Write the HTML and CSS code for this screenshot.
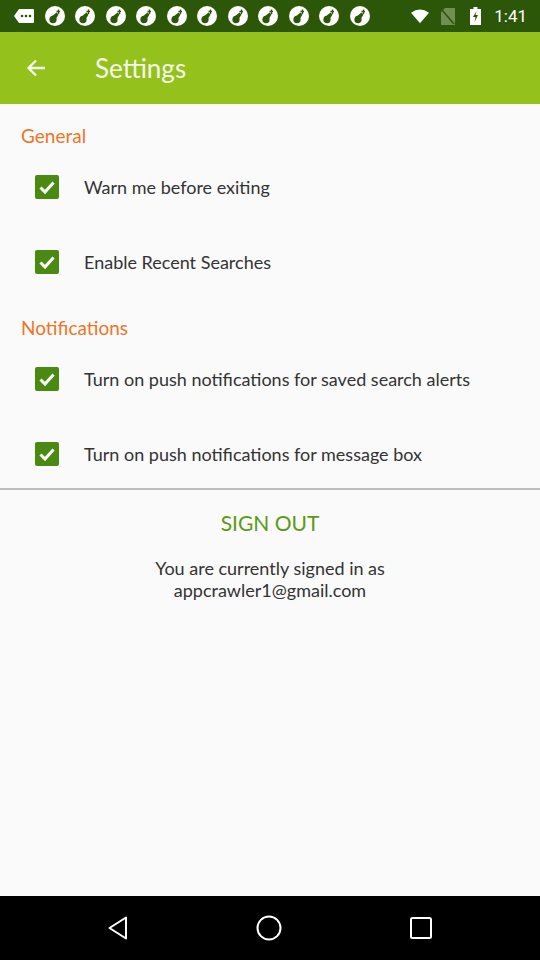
FILE: index.html
```html
<!DOCTYPE html>
<html>
<head>
<meta charset="utf-8">
<link rel="stylesheet" href="styles.css">
</head>
<body>
<div class="screen">
  <div class="statusbar">
    <div class="notifs">
      <svg class="msg" width="20" height="14" viewBox="0 0 20 14"><path d="M5 0H19a1 1 0 0 1 1 1V13a1 1 0 0 1-1 1H5L0 7Z" fill="#fff"/><circle cx="8" cy="7" r="1.3" fill="#2c5709"/><circle cx="12" cy="7" r="1.3" fill="#2c5709"/><circle cx="16" cy="7" r="1.3" fill="#2c5709"/></svg>
      <svg class="nt" viewBox="0 0 20 20"><circle cx="10" cy="10" r="10" fill="#fff"/><ellipse cx="8" cy="13.5" rx="3.6" ry="3.8" fill="#2c5709"/><path d="M6 11L11.5 6.5L13.5 8.5L10.5 13.5Z" fill="#2c5709"/><path d="M13.5 3.5V8M11.5 5.5H15" stroke="#2c5709" stroke-width="1.3"/></svg>
      <svg class="nt" viewBox="0 0 20 20"><circle cx="10" cy="10" r="10" fill="#fff"/><ellipse cx="8" cy="13.5" rx="3.6" ry="3.8" fill="#2c5709"/><path d="M6 11L11.5 6.5L13.5 8.5L10.5 13.5Z" fill="#2c5709"/><path d="M13.5 3.5V8M11.5 5.5H15" stroke="#2c5709" stroke-width="1.3"/></svg>
      <svg class="nt" viewBox="0 0 20 20"><circle cx="10" cy="10" r="10" fill="#fff"/><ellipse cx="8" cy="13.5" rx="3.6" ry="3.8" fill="#2c5709"/><path d="M6 11L11.5 6.5L13.5 8.5L10.5 13.5Z" fill="#2c5709"/><path d="M13.5 3.5V8M11.5 5.5H15" stroke="#2c5709" stroke-width="1.3"/></svg>
      <svg class="nt" viewBox="0 0 20 20"><circle cx="10" cy="10" r="10" fill="#fff"/><ellipse cx="8" cy="13.5" rx="3.6" ry="3.8" fill="#2c5709"/><path d="M6 11L11.5 6.5L13.5 8.5L10.5 13.5Z" fill="#2c5709"/><path d="M13.5 3.5V8M11.5 5.5H15" stroke="#2c5709" stroke-width="1.3"/></svg>
      <svg class="nt" viewBox="0 0 20 20"><circle cx="10" cy="10" r="10" fill="#fff"/><ellipse cx="8" cy="13.5" rx="3.6" ry="3.8" fill="#2c5709"/><path d="M6 11L11.5 6.5L13.5 8.5L10.5 13.5Z" fill="#2c5709"/><path d="M13.5 3.5V8M11.5 5.5H15" stroke="#2c5709" stroke-width="1.3"/></svg>
      <svg class="nt" viewBox="0 0 20 20"><circle cx="10" cy="10" r="10" fill="#fff"/><ellipse cx="8" cy="13.5" rx="3.6" ry="3.8" fill="#2c5709"/><path d="M6 11L11.5 6.5L13.5 8.5L10.5 13.5Z" fill="#2c5709"/><path d="M13.5 3.5V8M11.5 5.5H15" stroke="#2c5709" stroke-width="1.3"/></svg>
      <svg class="nt" viewBox="0 0 20 20"><circle cx="10" cy="10" r="10" fill="#fff"/><ellipse cx="8" cy="13.5" rx="3.6" ry="3.8" fill="#2c5709"/><path d="M6 11L11.5 6.5L13.5 8.5L10.5 13.5Z" fill="#2c5709"/><path d="M13.5 3.5V8M11.5 5.5H15" stroke="#2c5709" stroke-width="1.3"/></svg>
      <svg class="nt" viewBox="0 0 20 20"><circle cx="10" cy="10" r="10" fill="#fff"/><ellipse cx="8" cy="13.5" rx="3.6" ry="3.8" fill="#2c5709"/><path d="M6 11L11.5 6.5L13.5 8.5L10.5 13.5Z" fill="#2c5709"/><path d="M13.5 3.5V8M11.5 5.5H15" stroke="#2c5709" stroke-width="1.3"/></svg>
      <svg class="nt" viewBox="0 0 20 20"><circle cx="10" cy="10" r="10" fill="#fff"/><ellipse cx="8" cy="13.5" rx="3.6" ry="3.8" fill="#2c5709"/><path d="M6 11L11.5 6.5L13.5 8.5L10.5 13.5Z" fill="#2c5709"/><path d="M13.5 3.5V8M11.5 5.5H15" stroke="#2c5709" stroke-width="1.3"/></svg>
      <svg class="nt" viewBox="0 0 20 20"><circle cx="10" cy="10" r="10" fill="#fff"/><ellipse cx="8" cy="13.5" rx="3.6" ry="3.8" fill="#2c5709"/><path d="M6 11L11.5 6.5L13.5 8.5L10.5 13.5Z" fill="#2c5709"/><path d="M13.5 3.5V8M11.5 5.5H15" stroke="#2c5709" stroke-width="1.3"/></svg>
      <svg class="nt" viewBox="0 0 20 20"><circle cx="10" cy="10" r="10" fill="#fff"/><ellipse cx="8" cy="13.5" rx="3.6" ry="3.8" fill="#2c5709"/><path d="M6 11L11.5 6.5L13.5 8.5L10.5 13.5Z" fill="#2c5709"/><path d="M13.5 3.5V8M11.5 5.5H15" stroke="#2c5709" stroke-width="1.3"/></svg>
    </div>
    <div class="sys">
      <svg width="18" height="15" viewBox="0 0 21 16"><path d="M0 3.5Q10.5-4 21 3.5L10.5 16Z" fill="#fff"/></svg>
      <svg width="14" height="17" viewBox="0 0 14 17"><path d="M4 0H14V17H0V4Z" fill="#6f8f55"/><path d="M1 2L13 16" stroke="#2c5709" stroke-width="1.6"/></svg>
      <svg width="11" height="18" viewBox="0 0 11 18"><path d="M3.5 0H7.5V2H11V18H0V2H3.5Z" fill="#fff"/><path d="M6.5 4L3 10H5.5L4.5 15L8 8H5.5Z" fill="#2c5709"/></svg>
      <span class="time">1:41</span>
    </div>
  </div>
  <div class="toolbar">
    <svg class="back" width="20" height="20" viewBox="0 0 20 20"><path d="M19 10H3M10 2.5L2.5 10L10 17.5" stroke="#f4f8ea" stroke-width="2.4" fill="none"/></svg>
    <span class="title">Settings</span>
  </div>
  <div class="content">
    <div class="section-head first">General</div>
    <div class="rows">
      <div class="row"><span class="check"><svg viewBox="0 0 24 24" width="24" height="24"><path d="M5.5 12.5L10 17L18.5 7.5" stroke="#fff" stroke-width="3" fill="none"/></svg></span><span class="label">Warn me before exiting</span></div>
      <div class="row"><span class="check"><svg viewBox="0 0 24 24" width="24" height="24"><path d="M5.5 12.5L10 17L18.5 7.5" stroke="#fff" stroke-width="3" fill="none"/></svg></span><span class="label">Enable Recent Searches</span></div>
    </div>
    <div class="section-head">Notifications</div>
    <div class="rows">
      <div class="row"><span class="check"><svg viewBox="0 0 24 24" width="24" height="24"><path d="M5.5 12.5L10 17L18.5 7.5" stroke="#fff" stroke-width="3" fill="none"/></svg></span><span class="label">Turn on push notifications for saved search alerts</span></div>
      <div class="row last"><span class="check"><svg viewBox="0 0 24 24" width="24" height="24"><path d="M5.5 12.5L10 17L18.5 7.5" stroke="#fff" stroke-width="3" fill="none"/></svg></span><span class="label">Turn on push notifications for message box</span></div>
    </div>
    <div class="divider"></div>
    <div class="signout">SIGN OUT</div>
    <div class="signed">You are currently signed in as<br>appcrawler1@gmail.com</div>
  </div>
  <div class="navbar">
    <svg width="22" height="26" viewBox="0 0 22 26"><path d="M19 2.5V23.5L2.5 13Z" stroke="#fff" stroke-width="2" fill="none" stroke-linejoin="round"/></svg>
    <svg width="26" height="26" viewBox="0 0 26 26"><circle cx="13" cy="13" r="11.5" stroke="#fff" stroke-width="2" fill="none"/></svg>
    <svg width="24" height="24" viewBox="0 0 24 24"><rect x="2" y="2" width="20" height="20" rx="1.5" stroke="#fff" stroke-width="2" fill="none"/></svg>
  </div>
</div>
</body>
</html>
```
FILE: styles.css
```css
* { box-sizing: border-box; }
html, body { margin: 0; padding: 0; }
body { background: #fafafa; font-family: Lato, "Open Sans", sans-serif; }
.screen { width: 540px; height: 960px; display: flex; flex-direction: column; overflow: hidden; }
.statusbar { height: 32px; background: #2c5709; display: flex; align-items: center; justify-content: space-between; padding: 0 13px 0 14px; }
.notifs { display: flex; align-items: center; gap: 10.5px; }
.nt { width: 20px; height: 20px; }
.sys { display: flex; align-items: center; }
.sys svg:nth-child(1) { margin-right: 12px; }
.sys svg:nth-child(2) { margin-right: 15px; }
.sys svg:nth-child(3) { margin-right: 13px; }
.time { color: #fff; font-family: Roboto, sans-serif; font-size: 17px; }
.toolbar { height: 72px; background: #94c11c; display: flex; align-items: center; padding-left: 26px; }
.back { margin-right: 49px; }
.title { color: #f4f8ea; font-size: 26px; }
.content { flex: 1; display: flex; flex-direction: column; padding-top: 20px; }
.section-head { color: #f07425; font-size: 19px; line-height: 24px; padding-left: 21px; margin-top: 19px; }
.section-head.first { margin-top: 0; }
.rows { display: flex; flex-direction: column; gap: 5px; margin-top: 4px; }
.row { height: 70px; display: flex; align-items: center; padding-left: 35px; }
.row.last { height: 69px; }
.check { width: 24px; height: 24px; background: #4a8a10; border-radius: 2px; display: flex; margin-right: 25px; }
.label { color: #333; font-size: 18px; }
.divider { height: 2px; background: #bdbdbd; }
.signout { text-align: center; color: #5a9a16; font-size: 21px; line-height: 22px; margin-top: 22px; }
.signed { text-align: center; color: #333; font-size: 18px; line-height: 22px; margin-top: 23px; }
.navbar { height: 64px; background: #000; display: flex; align-items: center; justify-content: center; gap: 127px; }
```
